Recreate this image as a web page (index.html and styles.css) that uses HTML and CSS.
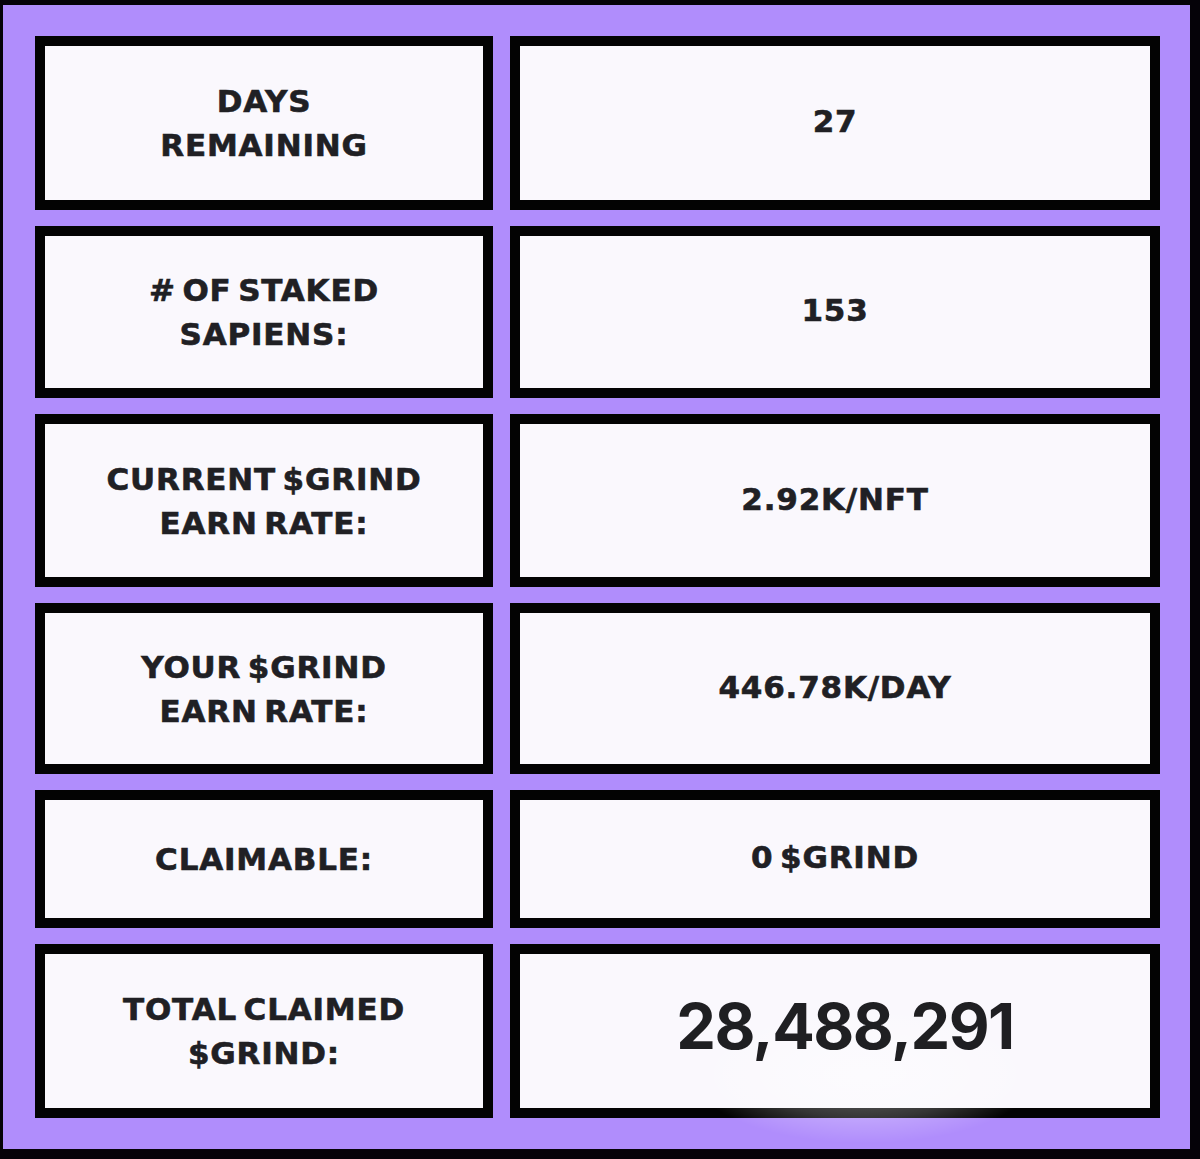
FILE: index.html
```html
<!DOCTYPE html>
<html lang="en">
<head>
<meta charset="utf-8">
<title>Staking Stats</title>
<link rel="stylesheet" href="styles.css">
</head>
<body>
<div class="frame">
  <div class="grid">
    <div class="cell label r1">DAYS<br>REMAINING</div>
    <div class="cell value r1">27</div>
    <div class="cell label">#&nbsp;OF STAKED<br>SAPIENS:</div>
    <div class="cell value">153</div>
    <div class="cell label">CURRENT $GRIND<br>EARN RATE:</div>
    <div class="cell value">2.92K/NFT</div>
    <div class="cell label">YOUR $GRIND<br>EARN RATE:</div>
    <div class="cell value">446.78K/DAY</div>
    <div class="cell label">CLAIMABLE:</div>
    <div class="cell value">0 $GRIND</div>
    <div class="cell label">TOTAL CLAIMED<br>$GRIND:</div>
    <div class="cell value big"><span class="glow"></span><span class="num">28,488,291</span></div>
  </div>
</div>
</body>
</html>
```

FILE: styles.css
```css
html, body {
  margin: 0;
  padding: 0;
  background: #000;
}

.frame {
  box-sizing: border-box;
  width: 1200px;
  height: 1159px;
  background: #b08dfc;
  border-style: solid;
  border-color: #050208;
  border-width: 5px 10px 10px 3px;
  padding: 31px 30px 31px 32px;
}

.grid {
  display: grid;
  grid-template-columns: 458px 650px;
  grid-template-rows: 174px 172px 173px 171px 138px 174px;
  column-gap: 17px;
  row-gap: 16px;
}

.cell {
  box-sizing: border-box;
  border: 10px solid #030303;
  background: #faf8fd;
  display: flex;
  align-items: center;
  justify-content: center;
  text-align: center;
  color: #202024;
  font-family: "DejaVu Sans", "Liberation Sans", sans-serif;
  font-weight: 700;
  font-size: 31px;
  line-height: 44px;
  letter-spacing: 0.8px;
  word-spacing: -5px;
  -webkit-text-stroke: 0.6px #202024;
}

.value {
  padding-bottom: 4px;
}

.big {
  position: relative;
  overflow: visible;
  padding-left: 20px;
}

.num {
  position: relative;
  font-family: "Inter", "Liberation Sans", sans-serif;
  font-weight: 700;
  font-size: 63px;
  line-height: 70px;
  letter-spacing: -1.5px;
  word-spacing: 0;
  -webkit-text-stroke: 0;
  color: #1f1f22;
  margin-bottom: 6px;
}

.glow {
  position: absolute;
  left: 170px;
  right: 110px;
  top: 50px;
  bottom: -36px;
  border-radius: 50%;
  background: radial-gradient(ellipse at center, rgba(255,255,255,0.45) 0%, rgba(255,255,255,0.2) 45%, rgba(255,255,255,0) 70%);
  pointer-events: none;
}
```
